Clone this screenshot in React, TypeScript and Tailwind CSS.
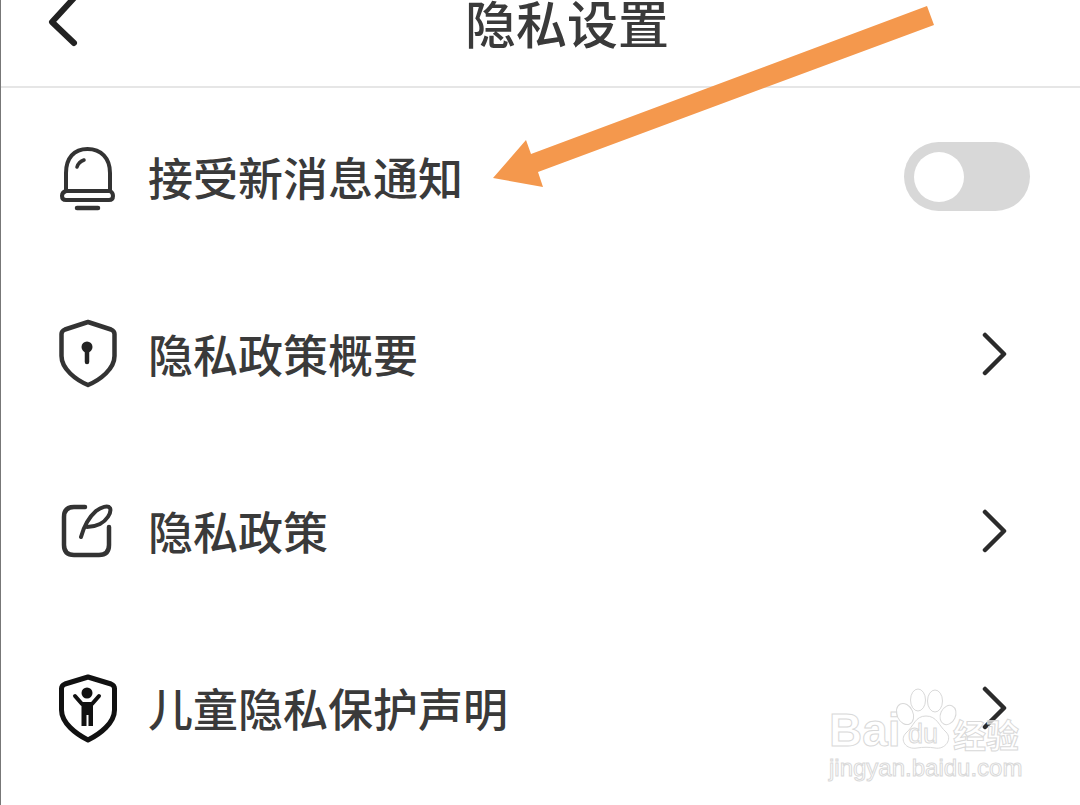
import type { ReactNode } from "react";

const cjk = "font-['Noto_Sans_CJK_SC','Noto_Sans',sans-serif]";

function BellIcon() {
  return (
    <svg width="60" height="70" viewBox="0 0 60 70" fill="none" stroke="#333" strokeWidth="4" strokeLinecap="round" strokeLinejoin="round">
      <path d="M8 49V31C8 16 16 7 29.5 7C43 7 52 16 52 31V49" />
      <path d="M8 49C5 50 4 52 4 54C4 57 6 58 8 58H51C53 58 55 57 55 54C55 52 54 50 52 49Z" />
      <path d="M19 66H40" strokeWidth="4.5" />
      <path d="M19 25C20 22 23 19 26 18" strokeWidth="3.5" />
    </svg>
  );
}

function LockShieldIcon() {
  return (
    <svg width="60" height="70" viewBox="0 0 60 70" fill="none" stroke="#333" strokeWidth="4.5" strokeLinecap="round" strokeLinejoin="round">
      <path d="M30 3L7 10.5Q3.5 12 3.5 15V37C3.5 50 18 61 30 66C42 61 56.5 50 56.5 37V15Q56.5 12 53 10.5Z" />
      <circle cx="29" cy="28" r="5.5" fill="#222" stroke="none" />
      <path d="M29 30V43" stroke="#222" />
    </svg>
  );
}

function QuillIcon() {
  return (
    <svg width="60" height="70" viewBox="0 0 60 70" fill="none" stroke="#333" strokeWidth="4.5" strokeLinecap="round" strokeLinejoin="round">
      <path d="M27 11H16Q6 11 6 21V49Q6 59 16 59H41Q51 59 51 49V31" />
      <path d="M23 41C26 30 30 22 38 15C43 11 50 9 52 12C54 17 48 25 42 28C38 30 33 31 29 31" strokeWidth="4" />
    </svg>
  );
}

function KidShieldIcon() {
  return (
    <svg width="60" height="70" viewBox="0 0 60 70" fill="none" stroke="#111" strokeWidth="5" strokeLinecap="round" strokeLinejoin="round">
      <path d="M30 4L7 11Q3.5 12.5 3.5 15.5V37C3.5 50 18 61 30 67C42 61 56.5 50 56.5 37V15.5Q56.5 12.5 53 11Z" />
      <circle cx="29" cy="20" r="5.5" fill="#111" stroke="none" />
      <path d="M17 23L24 31H34L41 23" strokeWidth="4" />
      <path d="M23.5 29H35V53H30.5V42H28.5V53H23.5Z" fill="#111" stroke="none" />
    </svg>
  );
}

function Chevron() {
  return (
    <svg width="26" height="44" viewBox="0 0 26 44" fill="none" stroke="#2b2b2b" strokeWidth="4.5" strokeLinecap="round" strokeLinejoin="round">
      <path d="M3 3L22 22L3 41" />
    </svg>
  );
}

function Row({ icon, label, right }: { icon: ReactNode; label: string; right: ReactNode }) {
  return (
    <div className="flex h-[177px] items-center pl-[57px]">
      <div className="flex w-[90px] shrink-0">{icon}</div>
      <span className="flex-1 text-[45px] font-medium leading-none text-[#3a3a3a]">{label}</span>
      {right}
    </div>
  );
}

function Toggle() {
  return (
    <div className="mr-[50px] flex h-[69px] w-[126px] items-center rounded-full bg-[#d8d8d8] pl-[10px]">
      <div className="h-[50px] w-[50px] rounded-full bg-white" />
    </div>
  );
}

function Watermark() {
  const stroke = "[-webkit-text-stroke:1px_#d9d9d9] text-white/70";
  return (
    <div className="pointer-events-none absolute left-[820px] top-[680px] h-[110px] w-[210px]">
      <span className={`absolute left-[8px] top-[27px] font-['Liberation_Sans',sans-serif] text-[46px] font-bold leading-none ${stroke}`}>Bai</span>
      <svg className="absolute left-[72px] top-[8px]" width="66" height="64" viewBox="0 0 66 64" fill="#ffffffb0" stroke="#d9d9d9" strokeWidth="1">
        <ellipse cx="12" cy="26" rx="8" ry="11" transform="rotate(-25 12 26)" />
        <ellipse cx="25" cy="12" rx="7.5" ry="11" />
        <ellipse cx="42" cy="13" rx="7.5" ry="11" />
        <ellipse cx="55" cy="27" rx="7.5" ry="10" transform="rotate(25 55 27)" />
        <path d="M33 28C44 28 46 38 53 44C60 51 52 62 42 60C36 59 30 59 24 60C13 62 6 52 13 45C21 38 22 28 33 28Z" />
      </svg>
      <span className={`absolute left-[87px] top-[41px] font-['Liberation_Sans',sans-serif] text-[27px] leading-none ${stroke}`}>du</span>
      <span className={`absolute left-[132px] top-[38px] ${cjk} text-[33px] font-bold leading-none ${stroke}`}>经验</span>
      <span className={`absolute left-[8px] top-[76px] font-['Liberation_Sans',sans-serif] text-[24px] leading-none ${stroke}`}>jingyan.baidu.com</span>
    </div>
  );
}

export default function App() {
  return (
    <div className={`relative h-[805px] w-[1080px] overflow-hidden border-l border-[#777] bg-white ${cjk}`}>
      {/* header, cropped at the top of the shot */}
      <div className="flex h-[88px] border-b-2 border-[#e6e6e6]">
        <svg className="ml-[45px] shrink-0" width="36" height="50" viewBox="0 0 36 50" fill="none" stroke="#222" strokeWidth="6" strokeLinecap="round" strokeLinejoin="round">
          <path d="M28 -2L6 22L28 43" />
        </svg>
        <h1 className="ml-[383px] text-[51px] font-medium leading-[44px] text-[#3a3a3a]">隐私设置</h1>
      </div>

      <Row icon={<BellIcon />} label="接受新消息通知" right={<Toggle />} />
      <Row icon={<LockShieldIcon />} label="隐私政策概要" right={<div className="mr-[72px]"><Chevron /></div>} />
      <Row icon={<QuillIcon />} label="隐私政策" right={<div className="mr-[72px]"><Chevron /></div>} />
      <Row icon={<KidShieldIcon />} label="儿童隐私保护声明" right={<div className="mr-[72px]"><Chevron /></div>} />

      {/* annotation arrow drawn on top of the screenshot */}
      <svg className="pointer-events-none absolute left-[-1px] top-0" width="1080" height="805" viewBox="0 0 1080 805">
        <polygon points="927,6 934,25 538,172 543,187 493,178 526,140 531,154" fill="#f4984d" />
      </svg>

      <Watermark />
    </div>
  );
}
